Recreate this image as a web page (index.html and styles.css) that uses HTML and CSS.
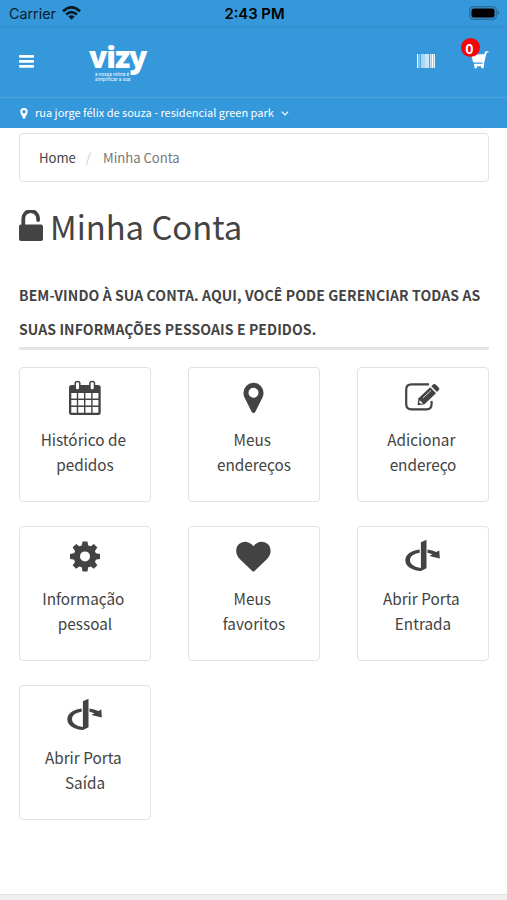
FILE: index.html
```html
<!DOCTYPE html>
<html lang="pt-BR">
<head>
  <meta charset="utf-8">
  <title>Minha Conta</title>
  <link rel="stylesheet" href="styles.css">
</head>
<body>
  <div class="status-bar">
    <div class="carrier">
      <span>Carrier</span>
      <svg width="19" height="14" viewBox="0 0 19 14" fill="none" stroke="#0b1c28" stroke-width="2.8">
        <path d="M1 5.2Q9.5-2.6 18 5.2M4.1 8.5Q9.5 3.800 14.900 8.500"/>
        <path d="M9.500 13.800L6.300 10.600Q9.500 7.900 12.700 10.600Z" fill="#0b1c28" stroke="none"/>
      </svg>
    </div>
    <div class="time">2:43 PM</div>
    <div class="battery">
      <svg width="31" height="14" viewBox="0 0 31 14">
        <rect x=".6" y=".6" width="26.800" height="12.800" rx="4" fill="#3a8fca" stroke="#286e9f" stroke-width="1.200"/>
        <rect x="2.500" y="2.500" width="23" height="9" rx="2.300" fill="#000"/>
        <path d="M28.500 4.800q1.800.6 1.800 2.200t-1.800 2.200z" fill="#286e9f"/>
      </svg>
    </div>
  </div>

  <header class="header">
    <svg class="menu" width="15" height="13" viewBox="0 0 15 13" fill="#fff">
      <rect width="15" height="2.700" rx=".6"/>
      <rect y="5" width="15" height="2.700" rx=".6"/>
      <rect y="10" width="15" height="2.700" rx=".6"/>
    </svg>
    <div class="logo">
      <div class="logo-name">vizy</div>
      <div class="logo-slogan">a nossa rotina é<br>simplificar a sua</div>
    </div>
    <svg class="barcode" width="18" height="14" viewBox="0 0 18 14" fill="#fff">
      <rect width="1.300" height="14"/>
      <rect x="2.300" width=".9" height="14" opacity=".6"/>
      <rect x="4" width="4" height="14" opacity=".6"/>
      <rect x="8" width="4" height="14" opacity=".75"/>
      <rect x="12.800" width="1.200" height="14" opacity=".7"/>
      <rect x="14.500" width="1.500" height="14"/>
      <rect x="16.500" width="1.500" height="14" opacity=".9"/>
    </svg>
    <div class="cart">
      <svg width="18" height="18" viewBox="0 0 18 18" fill="#fff">
        <path d="M0 3.300H13.200L14.200.8Q14.400.3 15 .3H17.500V1.500H15.700L13 12.500Q12.800 13.200 13 14H3.200V12.700H11.500L11.700 11.500H3.200Q2.200 11.500 1.900 10.500Z"/>
        <circle cx="4.700" cy="16" r="1.400"/>
        <circle cx="11.500" cy="16" r="1.400"/>
        <path d="M3.200 13h9.800v2.300H3.200z"/>
      </svg>
      <span class="badge">0</span>
    </div>
  </header>

  <div class="address">
    <svg width="8" height="11" viewBox="0 0 8 11" fill="#fff">
      <path fill-rule="evenodd" d="M4 0a3.700 3.700 0 0 1 3.700 3.700c0 1-.4 1.700-.7 2.400L4.700 10.500q-.7 1-1.400 0L1 6.100C.7 5.400.3 4.700.3 3.700A3.700 3.700 0 0 1 4 0zM4 2a1.800 1.800 0 1 0 0 3.600A1.800 1.800 0 0 0 4 2z"/>
    </svg>
    <span class="street">rua jorge félix de souza - residencial green park</span>
    <svg width="8" height="5" viewBox="0 0 8 5" fill="none" stroke="#fff" stroke-width="1.200">
      <path d="M.8.700L4 3.900 7.200.700"/>
    </svg>
  </div>

  <main class="container">
    <nav class="breadcrumb">
      <a>Home</a>
      <span class="slash">/</span>
      <span class="current">Minha Conta</span>
    </nav>

    <h1 class="title">
      <svg width="24" height="33" viewBox="0 0 24 33">
        <path d="M4.300 15V8.500a7.400 7.400 0 0 1 14.800 0V10" fill="none" stroke="#434343" stroke-width="3.800" stroke-linecap="round"/>
        <rect y="14.500" width="24" height="16.500" rx="2" fill="#434343"/>
      </svg>
      <span>Minha Conta</span>
    </h1>

    <p class="welcome">BEM-VINDO À SUA CONTA. AQUI, VOCÊ PODE GERENCIAR TODAS AS<br>SUAS INFORMAÇÕES PESSOAIS E PEDIDOS.</p>

    <div class="cards">
      <a class="card">
        <svg width="36" height="36" viewBox="0 0 36 36">
          <rect x="2" y="5" width="31.700" height="30" rx="2.500" fill="#434343"/>
          <path d="M4.300 13H9.800V18.600H4.300zM11.200 13H17V18.600H11.200zM18.400 13H24.200V18.600H18.400zM25.600 13H31.400V18.600H25.600zM4.300 20H9.800V25.600H4.300zM11.200 20H17V25.600H11.200zM18.400 20H24.200V25.600H18.400zM25.600 20H31.400V25.600H25.600zM4.300 27H9.800V32.700H4.300zM11.200 27H17V32.700H11.200zM18.400 27H24.200V32.700H18.400zM25.600 27H31.400V32.700H25.600z" fill="#fff"/>
          <rect x="8.200" y="1.500" width="4.600" height="8.600" rx="2" fill="#fff" stroke="#434343" stroke-width="1.500"/>
          <rect x="22.900" y="1.500" width="4.600" height="8.600" rx="2" fill="#fff" stroke="#434343" stroke-width="1.500"/>
        </svg>
        <span>Histórico de&nbsp;<br>pedidos</span>
      </a>
      <a class="card">
        <svg width="36" height="36" viewBox="0 0 36 36" fill="#434343">
          <path fill-rule="evenodd" d="M17.500 2.700A10 10 0 0 1 27.500 12.700C27.500 15 27 16.500 26.200 18L19.400 31.700Q17.500 34.300 15.600 31.700L8.800 18C8 16.500 7.500 15 7.500 12.700A10 10 0 0 1 17.500 2.700zM17.500 7.800A5 5 0 1 0 17.500 17.800 5 5 0 0 0 17.500 7.800z"/>
        </svg>
        <span>Meus&nbsp;<br>endereços</span>
      </a>
      <a class="card">
        <svg width="36" height="36" viewBox="0 0 36 36" fill="#434343">
          <path d="M24 4.300H6.500Q1.200 4.300 1.200 9.500V24Q1.200 29.300 6.500 29.300H21.500Q26.600 29.300 26.600 24V21" fill="none" stroke="#434343" stroke-width="2.200"/>
          <path d="M12.500 25.300L13.500 18.300 25.200 7.300 31 13.200 19.500 24.200z"/>
          <path d="M26.300 6.200L28.300 4.300Q29.500 3.400 30.700 4.500L33.900 7.800Q34.900 9 33.900 10.100L32 12z"/>
          <path d="M14.600 20.300L18 23.200 15.500 23.700 14.200 22.500z" fill="#fff"/>
          <path d="M18 18L26 10.400" stroke="#fff" stroke-width=".8"/>
        </svg>
        <span>Adicionar&nbsp;<br>endereço</span>
      </a>
      <a class="card">
        <svg width="36" height="36" viewBox="0 0 36 36">
          <g fill="#434343" transform="translate(18 17.400)">
            <circle r="11.300"/>
            <g id="teeth">
              <path d="M-3.300-10L-2.500-15H2.500L3.300-10V10L2.500 15H-2.500L-3.300 10z"/>
              <path d="M-10-3.300L-15-2.500V2.500L-10 3.300H10L15 2.500V-2.500L10-3.300z"/>
            </g>
            <use href="#teeth" transform="rotate(45)"/>
            <circle r="5" fill="#fff"/>
          </g>
        </svg>
        <span>Informação&nbsp;<br>pessoal</span>
      </a>
      <a class="card">
        <svg width="36" height="36" viewBox="0 0 36 36" fill="#434343">
          <path d="M17.400 32.600Q16.700 32.600 16.200 32.100L4 20.200C1.800 18 .2 15.300.2 12.200.2 6.300 4 2.800 9.500 2.800c3.200 0 6 2.300 7.900 4.400 1.900-2.100 4.700-4.400 7.900-4.400 5.500 0 9.300 3.500 9.300 9.400 0 3.100-1.600 5.800-3.800 8L18.600 32.100Q18.100 32.600 17.400 32.600z"/>
        </svg>
        <span>Meus&nbsp;<br>favoritos</span>
      </a>
      <a class="card">
        <svg width="36" height="36" viewBox="0 0 36 36" fill="#434343">
          <path id="door" d="M15.900 3.300L21.500.7V29.300L16 32C7 31.500.3 27.300.3 21.200.3 15.500 6.500 11.300 14.700 10.400V13.700C8.800 14.500 5 17.300 5 21.200 5 25 9.500 28.200 15.900 28.900zM22.500 10.400Q27.500 10.900 31.200 13.100L34.300 11.500 34.800 19.400 24.400 17 27.400 15.300Q25.300 14.200 22.500 13.700z"/>
        </svg>
        <span>Abrir Porta&nbsp;<br>Entrada</span>
      </a>
      <a class="card">
        <svg width="36" height="36" viewBox="0 0 36 36" fill="#434343">
          <use href="#door"/>
        </svg>
        <span>Abrir Porta&nbsp;<br>Saída</span>
      </a>
    </div>
  </main>

  <footer class="footer"></footer>
</body>
</html>
```
FILE: styles.css
```css
*{
  padding: 0;
  margin: 0;
  box-sizing: border-box;
}
body{
  height: 900px;
  display: flex;
  flex-direction: column;
  overflow: hidden;
  background: #fff;
  color: #434343;
  font-family: "Noto Sans CJK SC", "Noto Sans", sans-serif;
}
svg{
  display: block;
  flex-shrink: 0;
}
.status-bar{
  height: 28px;
  display: flex;
  align-items: center;
  padding: 0 7px 0 9px;
  background: #3498db;
  border-bottom: 2px solid #348fcd;
  color: #0b1c28;
  font-family: Inter, sans-serif;
  font-size: 14.3px;
}
.carrier, .battery{
  flex: 1;
  display: flex;
  align-items: center;
}
.carrier{
  gap: 6px;
}
.battery{
  justify-content: flex-end;
}
.time{
  padding-top: 1px;
  font-size: 14.8px;
  font-weight: 600;
  color: #000;
}
.header{
  height: 70px;
  display: flex;
  padding: 0 18px 0 19px;
  background: #3498db;
  border-bottom: 1px solid #50a5df;
}
.menu{
  margin-top: 27px;
}
.logo{
  margin-left: 55px;
  padding-top: 14px;
  color: #fff;
}
.logo-name{
  height: 30px;
  font-family: "Open Sans", sans-serif;
  font-weight: 800;
  font-size: 30px;
  line-height: 30px;
  letter-spacing: -1.1px;
}
.logo-slogan{
  margin-left: 6px;
  font-family: Roboto, sans-serif;
  font-size: 4.6px;
  line-height: 5.4px;
  letter-spacing: .1px;
}
.barcode{
  margin: 26px 0 0 auto;
}
.cart{
  position: relative;
  margin: 23px 0 0 36px;
}
.badge{
  position: absolute;
  top: -13px;
  left: -10px;
  width: 19px;
  height: 19px;
  padding-right: 2px;
  border-radius: 50%;
  background: #fa0008;
  color: #fff;
  font-size: 14px;
  font-weight: bold;
  line-height: 20px;
  text-align: center;
}
.address{
  height: 30px;
  display: flex;
  align-items: center;
  padding-left: 20px;
  background: #3498db;
  color: #fff;
  font-size: 11px;
}
.street{
  margin: -2px 7px 0;
}
.container{
  flex: 1;
  padding: 5px 18px 0 19px;
}
.breadcrumb{
  height: 49px;
  display: flex;
  align-items: center;
  padding: 0 0 1px 19px;
  border: 1px solid #e2e2e2;
  border-radius: 4px;
  font-size: 13.1px;
}
.slash{
  margin: 0 12px 0 10px;
  color: #ccc;
}
.current{
  color: #777;
}
.title{
  display: flex;
  align-items: center;
  height: 50px;
  margin-top: 19px;
  gap: 7px;
  font-size: 32.8px;
  font-weight: normal;
  line-height: 50px;
}
.welcome{
  height: 73px;
  margin-top: 26px;
  padding-top: 1px;
  border-bottom: 3px solid #e4e4e4;
  font-size: 14px;
  font-weight: bold;
  line-height: 34px;
  letter-spacing: .1px;
  white-space: nowrap;
}
.cards{
  display: grid;
  grid-template-columns: repeat(3, 132px);
  grid-auto-rows: 134.5px;
  justify-content: space-between;
  row-gap: 24.5px;
  margin-top: 17px;
}
.card{
  display: flex;
  flex-direction: column;
  align-items: center;
  padding-top: 12px;
  border: 1px solid #e2e2e2;
  border-radius: 4px;
  font-size: 15.3px;
  line-height: 24.5px;
  text-align: center;
}
.card span{
  margin-top: 11px;
}
.footer{
  height: 6px;
  background: #f0f0f0;
  border-top: 1px solid #e0e0e0;
}
```
